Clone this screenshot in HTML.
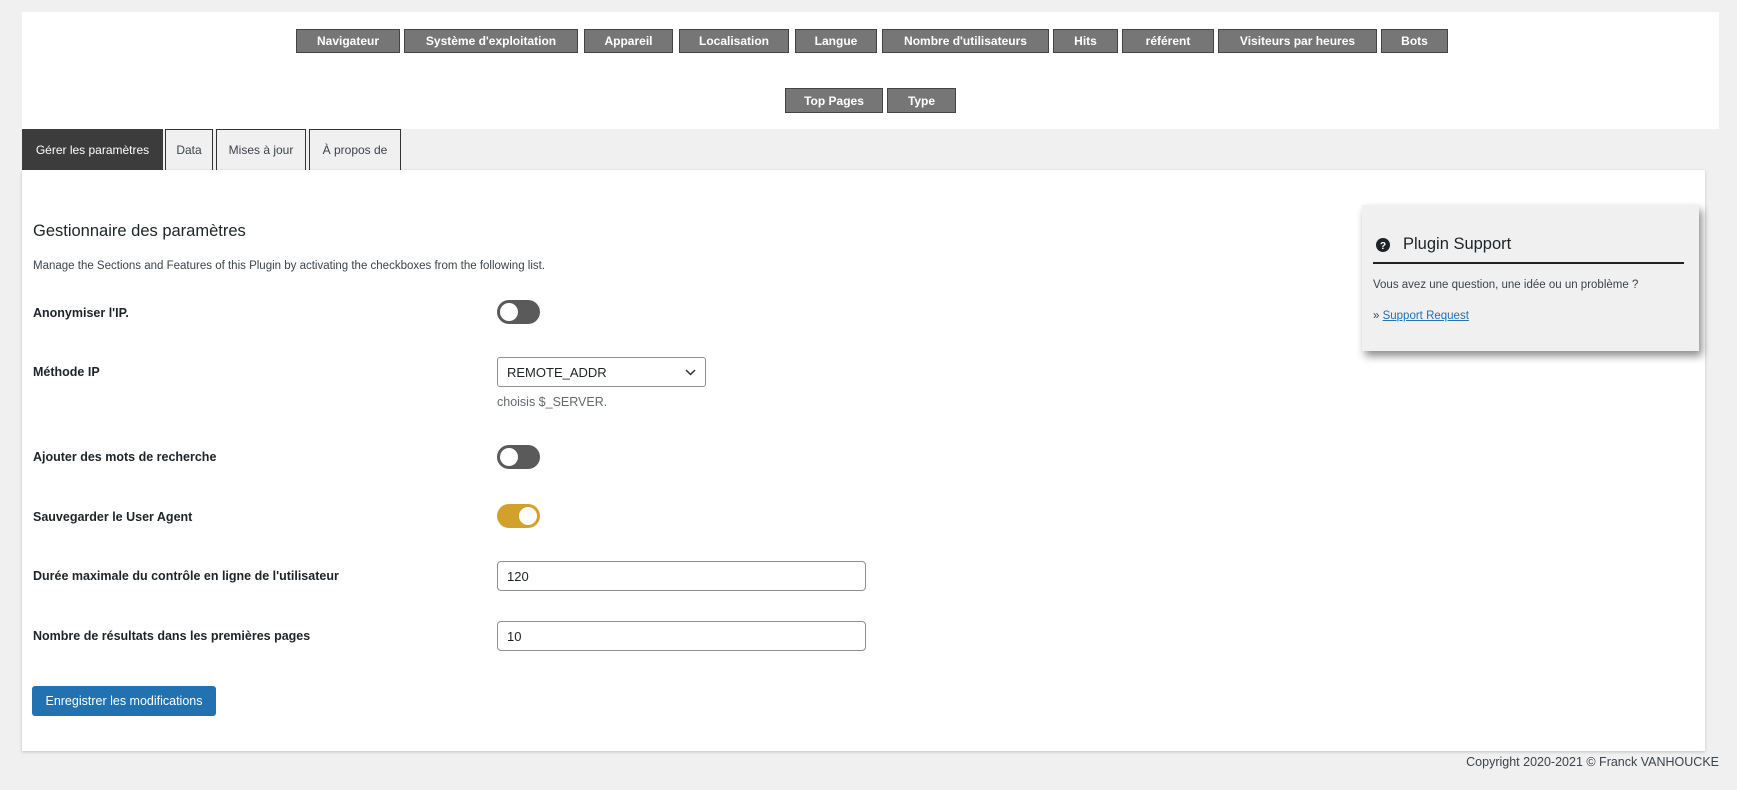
<!DOCTYPE html>
<html><head><meta charset="utf-8"><style>
*{box-sizing:border-box;margin:0;padding:0}
body{width:1737px;height:790px;background:#f0f0f1;font-family:"Liberation Sans",sans-serif;color:#1d2327;position:relative;overflow:hidden}
.a{position:absolute}
.top{left:22px;top:12px;width:1697px;height:117px;background:#fff}
.nb{position:absolute;height:24px;background:#767676;border:1px solid #444;color:#fff;font-size:12px;font-weight:bold;display:flex;align-items:center;justify-content:center;white-space:nowrap}
.tab{position:absolute;top:129px;height:41px;border:1px solid #333;border-bottom:none;background:#f0f0f1;font-size:12px;display:flex;align-items:center;justify-content:center;color:#3c434a}
.main{left:22px;top:170px;width:1683px;height:581px;background:#fff;box-shadow:0 1px 3px rgba(0,0,0,.2)}
.lbl{position:absolute;left:33px;font-size:12.5px;font-weight:bold;transform:translateY(-50%)}
.tg{position:absolute;left:497px;width:43px;height:24px;border-radius:12px;background:#5a5a5a}
.tg::after{content:"";position:absolute;left:3px;top:3px;width:18px;height:18px;border-radius:50%;background:#fff}
.tg.on{background:#d1a12b}.tg.on::after{left:22px}
.inp{position:absolute;left:497px;width:369px;height:30px;border:1px solid #8c8f94;border-radius:4px;background:#fff;font-size:13px;padding-left:9px;display:flex;align-items:center}
</style></head><body>
<div class="a top"></div>
<div class="nb" style="left:296px;top:29px;width:104px">Navigateur</div>
<div class="nb" style="left:404px;top:29px;width:174px">Système d'exploitation</div>
<div class="nb" style="left:584px;top:29px;width:89px">Appareil</div>
<div class="nb" style="left:679px;top:29px;width:110px">Localisation</div>
<div class="nb" style="left:795px;top:29px;width:82px">Langue</div>
<div class="nb" style="left:882px;top:29px;width:167px">Nombre d'utilisateurs</div>
<div class="nb" style="left:1053px;top:29px;width:65px">Hits</div>
<div class="nb" style="left:1122px;top:29px;width:92px">référent</div>
<div class="nb" style="left:1218px;top:29px;width:159px">Visiteurs par heures</div>
<div class="nb" style="left:1381px;top:29px;width:67px">Bots</div>
<div class="nb" style="left:785px;top:88px;width:98px;height:25px">Top Pages</div>
<div class="nb" style="left:887px;top:88px;width:69px;height:25px">Type</div>
<div class="tab" style="left:22px;width:141px;background:#3c3c3c;color:#fff;border-color:#3c3c3c">Gérer les paramètres</div>
<div class="tab" style="left:165px;width:48px">Data</div>
<div class="tab" style="left:216px;width:90px">Mises à jour</div>
<div class="tab" style="left:309px;width:92px">À propos de</div>
<div class="a main"></div>
<div class="a" style="left:33px;top:222px;font-size:16.5px;color:#1d2327">Gestionnaire des paramètres</div>
<div class="a" style="left:33px;top:260px;font-size:11.5px;color:#3c434a">Manage the Sections and Features of this Plugin by activating the checkboxes from the following list.</div>
<div class="lbl" style="top:313px">Anonymiser l'IP.</div>
<div class="tg" style="top:300px"></div>
<div class="lbl" style="top:372px">Méthode IP</div>
<div class="inp" style="top:357px;width:209px;height:30px;border-radius:3px">REMOTE_ADDR<svg style="position:absolute;right:9px;top:11px" width="11" height="7" viewBox="0 0 11 7"><path d="M1 1l4.5 4.5L10 1" fill="none" stroke="#333" stroke-width="1.5"/></svg></div>
<div class="a" style="left:497px;top:395px;font-size:12.5px;color:#646970">choisis $_SERVER.</div>
<div class="lbl" style="top:457px">Ajouter des mots de recherche</div>
<div class="tg" style="top:445px"></div>
<div class="lbl" style="top:517px">Sauvegarder le User Agent</div>
<div class="tg on" style="top:504px"></div>
<div class="lbl" style="top:576px">Durée maximale du contrôle en ligne de l'utilisateur</div>
<div class="inp" style="top:561px">120</div>
<div class="lbl" style="top:636px">Nombre de résultats dans les premières pages</div>
<div class="inp" style="top:621px">10</div>
<div class="a" style="left:32px;top:686px;width:184px;height:30px;background:#2271b1;border-radius:3px;color:#fff;font-size:12.5px;display:flex;align-items:center;justify-content:center">Enregistrer les modifications</div>
<div class="a" style="left:1362px;top:205px;width:337px;height:146px;background:#f0f0f1;box-shadow:3px 5px 8px rgba(0,0,0,.45)"></div>
<svg class="a" style="left:1376px;top:238px" width="14" height="14" viewBox="0 0 14 14"><circle cx="7" cy="7" r="7" fill="#1d2327"/><text x="7" y="11" font-size="10" font-weight="bold" fill="#fff" text-anchor="middle" font-family="Liberation Sans">?</text></svg>
<div class="a" style="left:1403px;top:235px;font-size:16.5px">Plugin Support</div>
<div class="a" style="left:1373px;top:262px;width:311px;height:2px;background:#1d2327"></div>
<div class="a" style="left:1373px;top:279px;font-size:11.5px;color:#3c434a">Vous avez une question, une idée ou un problème ?</div>
<div class="a" style="left:1373px;top:310px;font-size:11.5px;color:#3c434a">» <span style="color:#2271b1;text-decoration:underline">Support Request</span></div>
<div class="a" style="right:18px;top:755px;font-size:12.5px;color:#3c434a">Copyright 2020-2021 © Franck VANHOUCKE</div>
</body></html>
